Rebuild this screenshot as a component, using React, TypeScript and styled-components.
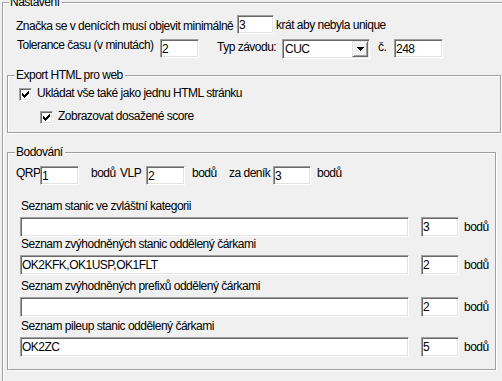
import React from 'react';
import styled, { createGlobalStyle } from 'styled-components';

const GlobalStyle = createGlobalStyle`
  html, body {
    margin: 0;
    padding: 0;
    background: #f0f0f0;
  }
  body {
    font-family: "Liberation Sans", Arial, sans-serif;
    font-size: 12px;
    letter-spacing: -0.5px;
    line-height: 15px;
    color: #000;
    overflow: hidden;
  }
  * {
    box-sizing: border-box;
  }
`;

const Screen = styled.div`
  width: 502px;
  height: 381px;
  overflow: hidden;
  padding: 2px 0 0 2px;
`;

// etched group box (classic windows look)
const Frame = styled.div<{ $w: number; $h: number; $mt?: number; $pad?: string }>`
  position: relative;
  flex: none;
  width: ${(p) => p.$w}px;
  height: ${(p) => p.$h}px;
  margin-top: ${(p) => p.$mt ?? 0}px;
  padding: ${(p) => p.$pad ?? '0'};
  border: 1px solid #a0a0a0;
  box-shadow: inset 1px 1px 0 #fff, 1px 1px 0 #fff;
  display: flex;
  flex-direction: column;
`;

const Legend = styled.span<{ $left: number }>`
  position: absolute;
  top: -8px;
  left: ${(p) => p.$left}px;
  padding: 0 2px 0 1px;
  background: #f0f0f0;
  white-space: nowrap;
`;

const Row = styled.div<{ $indent: number; $mt?: number }>`
  display: flex;
  align-items: flex-start;
  height: 19px;
  margin-top: ${(p) => p.$mt ?? 0}px;
  padding-left: ${(p) => p.$indent}px;
`;

const Text = styled.span<{ $w?: number; $ml?: number; $dy?: number }>`
  flex: none;
  width: ${(p) => (p.$w ? `${p.$w}px` : 'auto')};
  margin-left: ${(p) => p.$ml ?? 0}px;
  margin-top: ${(p) => p.$dy ?? 2}px;
  white-space: nowrap;
`;

const TextBox = styled.input<{ $w: number; $h?: number }>`
  flex: none;
  width: ${(p) => p.$w}px;
  height: ${(p) => p.$h ?? 19}px;
  margin: 0;
  padding: 0 1px;
  font: inherit;
  letter-spacing: inherit;
  line-height: 15px;
  color: #000;
  background: #fff;
  border: 1px solid;
  border-color: #a0a0a0 #fff #fff #a0a0a0;
  box-shadow: inset 1px 1px 0 #696969, inset -1px -1px 0 #e3e3e3;
  outline: none;
`;

const Combo = styled.div<{ $w: number }>`
  flex: none;
  display: flex;
  align-items: center;
  width: ${(p) => p.$w}px;
  height: 20px;
  padding: 0 1px 0 2px;
  background: #fff;
  border: 1px solid;
  border-color: #a0a0a0 #fff #fff #a0a0a0;
  box-shadow: inset 1px 1px 0 #696969, inset -1px -1px 0 #e3e3e3;
`;

const ComboValue = styled.span`
  flex: 1;
  white-space: nowrap;
`;

const DropButton = styled.span`
  flex: none;
  width: 16px;
  height: 16px;
  display: flex;
  align-items: center;
  justify-content: center;
  background: #f0f0f0;
  border: 1px solid;
  border-color: #e3e3e3 #696969 #696969 #e3e3e3;
  box-shadow: inset 1px 1px 0 #fff, inset -1px -1px 0 #a0a0a0;
`;

const CheckRow = styled.div<{ $indent: number; $mt?: number }>`
  display: flex;
  align-items: flex-start;
  height: 13px;
  margin-top: ${(p) => p.$mt ?? 0}px;
  padding-left: ${(p) => p.$indent}px;
`;

const CheckBox = styled.span`
  flex: none;
  width: 13px;
  height: 13px;
  display: flex;
  align-items: center;
  justify-content: center;
  background: #fff;
  border: 1px solid;
  border-color: #a0a0a0 #fff #fff #a0a0a0;
  box-shadow: inset 1px 1px 0 #696969, inset -1px -1px 0 #e3e3e3;
`;

const CheckLabel = styled.span`
  margin-left: 5px;
  margin-top: -2px;
  white-space: nowrap;
`;

const Block = styled.div<{ $mt: number }>`
  display: flex;
  flex-direction: column;
  margin-top: ${(p) => p.$mt}px;
  padding-left: 4px;
`;

const BlockLabel = styled.div`
  height: 15px;
  margin: 0 0 3px 1px;
  white-space: nowrap;
`;

const FieldRow = styled.div`
  display: flex;
  align-items: flex-start;
  gap: 12px;
  height: 20px;
`;

const Unit = styled.span`
  margin: 3px 0 0 -7px;
  white-space: nowrap;
`;

const Tick = () => (
  <svg width="7" height="7" viewBox="0 0 7 7" shapeRendering="crispEdges">
    {[2, 3, 4, 3, 2, 1, 0].map((y, x) => (
      <rect key={x} x={x} y={y} width="1" height="3" fill="#000" />
    ))}
  </svg>
);

const Arrow = () => (
  <svg width="7" height="4" viewBox="0 0 7 4" shapeRendering="crispEdges">
    <rect x="0" y="0" width="7" height="1" fill="#000" />
    <rect x="1" y="1" width="5" height="1" fill="#000" />
    <rect x="2" y="2" width="3" height="1" fill="#000" />
    <rect x="3" y="3" width="1" height="1" fill="#000" />
  </svg>
);

const lists = [
  { label: 'Seznam stanic ve zvláštní kategorii', value: '', points: '3', mt: 14 },
  { label: 'Seznam zvýhodněných stanic oddělený čárkami', value: 'OK2KFK,OK1USP,OK1FLT', points: '2', mt: 0 },
  { label: 'Seznam zvýhodněných prefixů oddělený čárkami', value: '', points: '2', mt: 4 },
  { label: 'Seznam pileup stanic oddělený čárkami', value: 'OK2ZC', points: '5', mt: 2 },
];

const App: React.FC = () => {
  return (
    <Screen>
      <GlobalStyle />
      <Frame $w={512} $h={400} $pad="12px 0 0 4px">
        <Legend $left={6}>Nastavení</Legend>

        <Row $indent={9}>
          <Text $w={221} $dy={4}>Značka se v denících musí objevit minimálně</Text>
          <TextBox $w={37} readOnly defaultValue="3" />
          <Text $ml={2} $dy={3}>krát aby nebyla unique</Text>
        </Row>

        <Row $indent={10} $mt={5}>
          <Text $w={143} $dy={-1}>Tolerance času (v minutách)</Text>
          <TextBox $w={39} readOnly defaultValue="2" />
          <Text $w={65} $ml={18} $dy={1}>Typ závodu:</Text>
          <Combo $w={88}>
            <ComboValue>CUC</ComboValue>
            <DropButton>
              <Arrow />
            </DropButton>
          </Combo>
          <Text $w={16} $ml={8} $dy={1}>č.</Text>
          <TextBox $w={49} readOnly defaultValue="248" />
        </Row>

        <Frame $w={494} $h={58} $mt={17} $pad="12px 0 0 11px">
          <Legend $left={7}>Export HTML pro web</Legend>
          <CheckRow $indent={0}>
            <CheckBox>
              <Tick />
            </CheckBox>
            <CheckLabel>Ukládat vše také jako jednu HTML stránku</CheckLabel>
          </CheckRow>
          <CheckRow $indent={21} $mt={10}>
            <CheckBox>
              <Tick />
            </CheckBox>
            <CheckLabel>Zobrazovat dosažené score</CheckLabel>
          </CheckRow>
        </Frame>

        <Frame $w={489} $h={218} $mt={19} $pad="13px 0 0 8px">
          <Legend $left={7}>Bodování</Legend>
          <Row $indent={0}>
            <Text $w={24} $dy={0}>QRP</Text>
            <TextBox $w={39} readOnly defaultValue="1" />
            <Text $w={29} $ml={12} $dy={0}>bodů</Text>
            <Text $w={26} $dy={0}>VLP</Text>
            <TextBox $w={39} readOnly defaultValue="2" />
            <Text $w={37} $ml={7} $dy={0}>bodů</Text>
            <Text $w={44} $dy={0}>za deník</Text>
            <TextBox $w={38} readOnly defaultValue="3" />
            <Text $ml={6} $dy={0}>bodů</Text>
          </Row>

          {lists.map((l) => (
            <Block key={l.label} $mt={l.mt}>
              <BlockLabel>{l.label}</BlockLabel>
              <FieldRow>
                <TextBox $w={389} $h={20} readOnly defaultValue={l.value} />
                <TextBox $w={38} $h={20} readOnly defaultValue={l.points} />
                <Unit>bodů</Unit>
              </FieldRow>
            </Block>
          ))}
        </Frame>
      </Frame>
    </Screen>
  );
};

export default App;
